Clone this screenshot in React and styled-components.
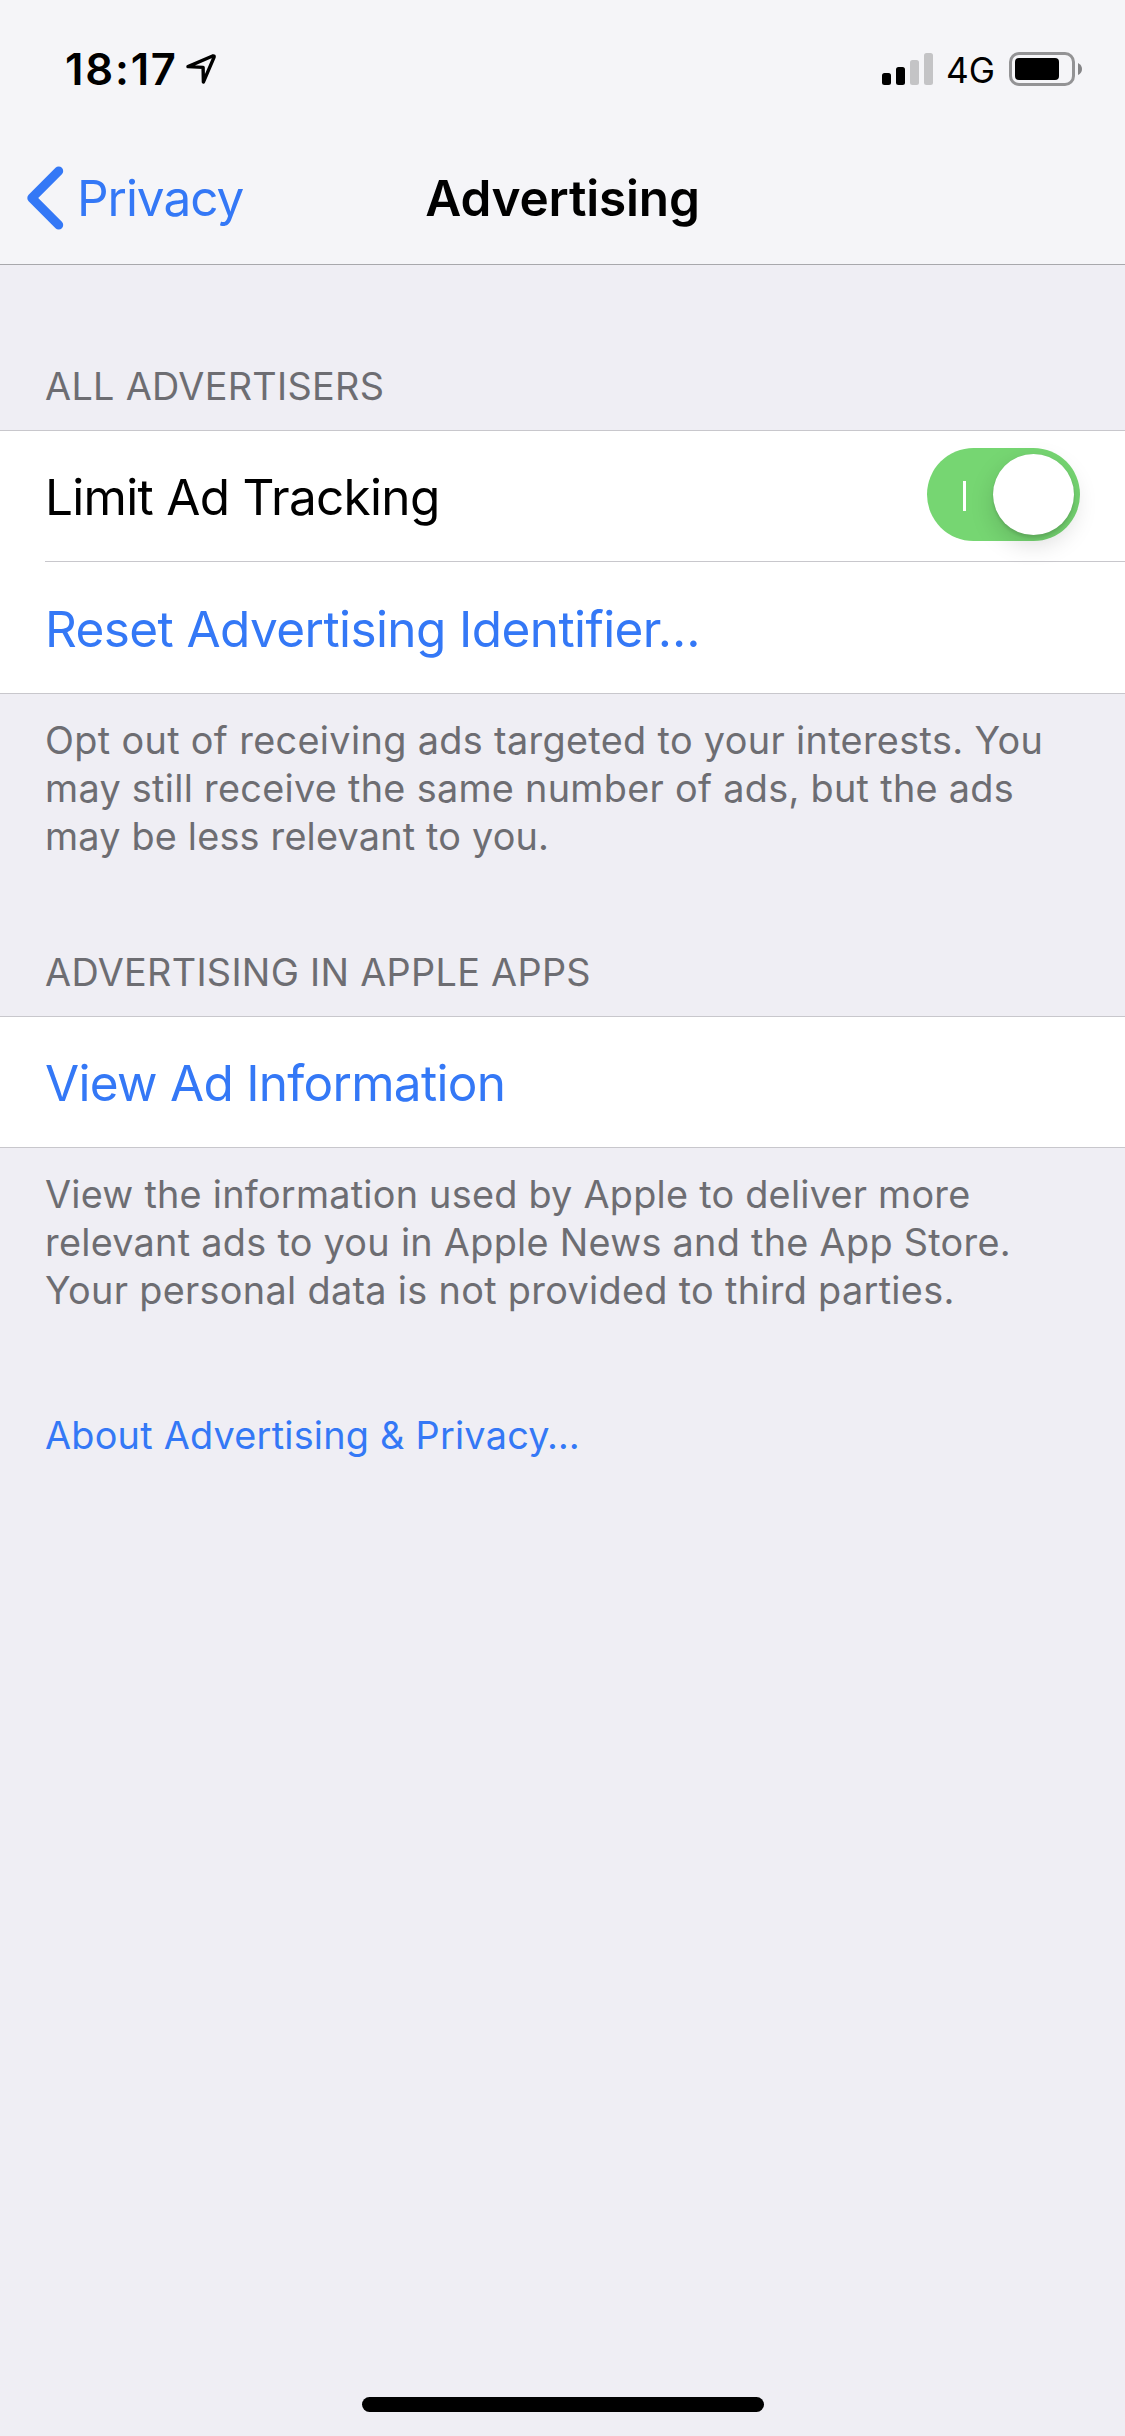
import React, { useState } from 'react'
import styled, { createGlobalStyle } from 'styled-components'

const GlobalStyle = createGlobalStyle`
    * {
        box-sizing: border-box;
    }

    body {
        margin: 0;
        font-family: Inter, 'Liberation Sans', sans-serif;
        background-color: #efeef4;
    }
`

const Screen = styled.div`
    width: 1125px;
    height: 2436px;
    display: flex;
    flex-direction: column;
    color: black;
    background-color: #efeef4;
`

const Header = styled.header`
    background-color: #f5f5f8;
    border-bottom: 1px solid #a8a8ac;
`

const StatusBar = styled.div`
    height: 132px;
    display: flex;
    align-items: center;
    justify-content: space-between;
    padding: 6px 43px 0 65px;
`

const StatusGroup = styled.div`
    display: flex;
    align-items: center;
`

const Time = styled.span`
    font-size: 43.6px;
    font-weight: 600;
    letter-spacing: 1.8px;
    margin-right: 8px;
`

const Network = styled.span`
    font-size: 35.2px;
    padding-top: 2px;
    margin: 0 14px 0 13px;
`

const NavBar = styled.nav`
    height: 132px;
    display: grid;
    grid-template-columns: 1fr auto 1fr;
    align-items: center;
    padding: 0 27px;
`

const BackButton = styled.button`
    display: flex;
    align-items: center;
    gap: 13px;
    padding: 0;
    border: none;
    background: none;
    font: inherit;
    font-size: 49.5px;
    letter-spacing: -1.05px;
    color: #3478f6;
`

const Title = styled.h1`
    margin: 0;
    font-size: 49.5px;
    font-weight: 600;
    letter-spacing: -0.18px;
`

const Section = styled.section`
    padding-top: ${props => props.$top}px;
`

const SectionTitle = styled.h2`
    margin: 0 0 20px 45px;
    font-size: 37.8px;
    font-weight: 400;
    line-height: 48px;
    letter-spacing: 0.3px;
    text-transform: uppercase;
    color: #6d6d72;
`

const Group = styled.div`
    background-color: white;
    border-top: 1px solid #c8c7cc;
    border-bottom: 1px solid #c8c7cc;
`

const Row = styled.div`
    height: ${props => props.$height || 130}px;
    display: flex;
    align-items: center;
    justify-content: space-between;
    padding-right: 45px;
    padding-left: 45px;
`

const Divider = styled.div`
    height: 1px;
    margin-left: 45px;
    background-color: #c8c7cc;
`

const Label = styled.span`
    padding-top: 2px;
    font-size: 49.5px;
    letter-spacing: ${props => props.$spacing}px;
    color: ${props => (props.$link ? '#3478f6' : 'black')};
`

const Switch = styled.button`
    width: 153px;
    height: 93px;
    display: flex;
    align-items: center;
    justify-content: space-between;
    margin-bottom: 3px;
    padding: 0 6px 0 36px;
    border: none;
    border-radius: 47px;
    background-color: #76d672;
`

const SwitchMark = styled.span`
    width: 3px;
    height: 30px;
    margin-top: 3px;
    background-color: white;
`

const Knob = styled.span`
    width: 81px;
    height: 81px;
    border-radius: 50%;
    background-color: white;
    box-shadow:
        0 9px 24px rgba(0, 0, 0, 0.15),
        0 3px 3px rgba(0, 0, 0, 0.1),
        0 0 1px rgba(0, 0, 0, 0.12);
`

const Footnote = styled.p`
    margin: 22px 0 0 45px;
    font-size: 37.8px;
    line-height: 48px;
    color: #6d6d72;
`

const FootnoteLine = styled.span`
    display: block;
    white-space: nowrap;
    letter-spacing: ${props => props.$spacing}px;
`

const AboutLink = styled.a`
    margin: 97px 0 0 45px;
    font-size: 37.8px;
    line-height: 48px;
    letter-spacing: 0.24px;
    color: #3478f6;
`

const HomeIndicator = styled.div`
    width: 402px;
    height: 15px;
    margin: auto auto 24px 362px;
    border-radius: 8px;
    background-color: black;
`

// Icons
const LocationIcon = () => (
    <svg width="30" height="30" viewBox="0 0 30 30" fill="none" stroke="black" strokeWidth="3.4" strokeLinecap="round" strokeLinejoin="round">
        <path d="M2 12.6 L26.6 2 Q28.6 1.4 28 3.4 L17.4 28 L17.1 13.4 Z" />
    </svg>
)

const SignalIcon = () => (
    <svg width="51" height="32" viewBox="0 0 51 32">
        <rect x="0" y="20" width="9" height="12" rx="2.5" fill="black" />
        <rect x="14" y="14" width="9" height="18" rx="2.5" fill="black" />
        <rect x="28" y="7" width="9" height="25" rx="2.5" fill="#c4c4c6" />
        <rect x="42" y="0" width="9" height="32" rx="2.5" fill="#c4c4c6" />
    </svg>
)

const BatteryIcon = () => (
    <svg width="73" height="34" viewBox="0 0 73 34">
        <rect x="1.5" y="1.5" width="63" height="31" rx="8.5" fill="none" stroke="#939395" strokeWidth="3" />
        <rect x="6" y="6" width="44" height="22" rx="4" fill="black" />
        <path d="M69 11 Q73 13 73 17 Q73 21 69 23 Z" fill="#858587" />
    </svg>
)

const BackIcon = () => (
    <svg width="37" height="64" viewBox="0 0 37 64" fill="none" stroke="#3478f6" strokeWidth="9" strokeLinecap="round" strokeLinejoin="round">
        <path d="M31.7 5 L4.8 32 L31.7 59" />
    </svg>
)

const TRACKING_NOTE = [
    { text: 'Opt out of receiving ads targeted to your interests. You', spacing: 0.35 },
    { text: 'may still receive the same number of ads, but the ads', spacing: 0.3 },
    { text: 'may be less relevant to you.', spacing: 0.2 },
]

const APPS_NOTE = [
    { text: 'View the information used by Apple to deliver more', spacing: 0.25 },
    { text: 'relevant ads to you in Apple News and the App Store.', spacing: 0.29 },
    { text: 'Your personal data is not provided to third parties.', spacing: 0.32 },
]

const App = () => {
    const [limited, setLimited] = useState(true)

    return (
        <Screen>
            <GlobalStyle />
            <Header>
                <StatusBar>
                    <StatusGroup>
                        <Time>18:17</Time>
                        <LocationIcon />
                    </StatusGroup>
                    <StatusGroup>
                        <SignalIcon />
                        <Network>4G</Network>
                        <BatteryIcon />
                    </StatusGroup>
                </StatusBar>
                <NavBar>
                    <BackButton>
                        <BackIcon />
                        Privacy
                    </BackButton>
                    <Title>Advertising</Title>
                </NavBar>
            </Header>

            <Section $top={97}>
                <SectionTitle>All Advertisers</SectionTitle>
                <Group>
                    <Row>
                        <Label $spacing={-0.7}>Limit Ad Tracking</Label>
                        <Switch role="switch" aria-checked={limited} onClick={() => setLimited(!limited)}>
                            <SwitchMark />
                            <Knob />
                        </Switch>
                    </Row>
                    <Divider />
                    <Row $height={131}>
                        <Label $link $spacing={-0.59}>Reset Advertising Identifier…</Label>
                    </Row>
                </Group>
                <Footnote>
                    {TRACKING_NOTE.map(line => (
                        <FootnoteLine key={line.text} $spacing={line.spacing}>{line.text}</FootnoteLine>
                    ))}
                </Footnote>
            </Section>

            <Section $top={88}>
                <SectionTitle>Advertising in Apple Apps</SectionTitle>
                <Group>
                    <Row>
                        <Label $link $spacing={-0.71}>View Ad Information</Label>
                    </Row>
                </Group>
                <Footnote>
                    {APPS_NOTE.map(line => (
                        <FootnoteLine key={line.text} $spacing={line.spacing}>{line.text}</FootnoteLine>
                    ))}
                </Footnote>
            </Section>

            <AboutLink>About Advertising &amp; Privacy…</AboutLink>
            <HomeIndicator />
        </Screen>
    )
}

export default App
